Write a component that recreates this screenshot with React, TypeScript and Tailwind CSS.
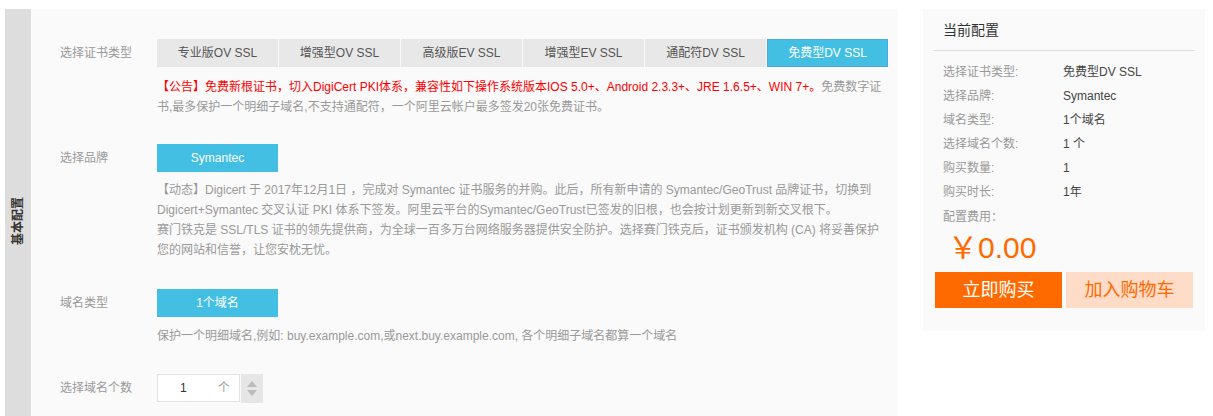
const font = { fontFamily: '"Liberation Sans", "Noto Sans CJK SC", sans-serif' };

const certTypes = ["专业版OV SSL", "增强型OV SSL", "高级版EV SSL", "增强型EV SSL", "通配符DV SSL", "免费型DV SSL"];

const summary: [string, string][] = [
  ["选择证书类型:", "免费型DV SSL"],
  ["选择品牌:", "Symantec"],
  ["域名类型:", "1个域名"],
  ["选择域名个数:", "1 个"],
  ["购买数量:", "1"],
  ["购买时长:", "1年"],
];

function Row({ label, children, className = "" }: { label: string; children: React.ReactNode; className?: string }) {
  return (
    <div className={`flex ${className}`}>
      <div className="w-[97px] shrink-0 text-[12px] leading-[28px] text-[#999]">{label}</div>
      <div className="flex-1">{children}</div>
    </div>
  );
}

function ChoiceButton({ text }: { text: string }) {
  return (
    <div className="flex h-[28px] w-[121px] items-center justify-center bg-[#43bfe4] text-[12px] text-white">{text}</div>
  );
}

export default function App() {
  return (
    <div className="h-[416px] overflow-hidden bg-white pl-[5px] pt-[9px]" style={font}>
      <div className="flex items-start">
        <div className="flex h-[424px] w-[893px] shrink-0">
          <div className="flex w-[26px] shrink-0 items-center justify-center bg-[#dddddd]">
            <span className="-rotate-90 whitespace-nowrap text-[12px] font-bold text-[#333]">基本配置</span>
          </div>
          <div className="flex-1 bg-[#fafafa] pl-[29px] pr-[10px] pt-[30px]">
            <Row label="选择证书类型">
              <div className="flex gap-[1px]">
                {certTypes.map((t, i) =>
                  i === certTypes.length - 1 ? (
                    <div key={t} className="flex h-[28px] w-[121px] items-center justify-center border border-[#4aa8e8] bg-[#43bfe4] text-[12px] text-white">{t}</div>
                  ) : (
                    <div key={t} className="flex h-[28px] w-[121px] items-center justify-center bg-[#e8e8e8] text-[12px] text-[#555]">{t}</div>
                  )
                )}
              </div>
              <p className="mt-[10px] w-[730px] text-[12px] leading-[20px] text-[#999]">
                <span className="text-[#ff0000]">【公告】免费新根证书，切入DigiCert PKI体系，兼容性如下操作系统版本IOS 5.0+、Android 2.3.3+、JRE 1.6.5+、WIN 7+。</span>
                免费数字证书,最多保护一个明细子域名,不支持通配符，一个阿里云帐户最多签发20张免费证书。
              </p>
            </Row>

            <Row label="选择品牌" className="mt-[27px]">
              <ChoiceButton text="Symantec" />
              <p className="mt-[8px] w-[730px] text-[12px] leading-[20px] text-[#999]">
                【动态】Digicert 于 2017年12月1日 ，完成对 Symantec 证书服务的并购。此后，所有新申请的 Symantec/GeoTrust 品牌证书，切换到 Digicert+Symantec 交叉认证 PKI 体系下签发。阿里云平台的Symantec/GeoTrust已签发的旧根，也会按计划更新到新交叉根下。
                <br />
                赛门铁克是 SSL/TLS 证书的领先提供商，为全球一百多万台网络服务器提供安全防护。选择赛门铁克后，证书颁发机构 (CA) 将妥善保护您的网站和信誉，让您安枕无忧。
              </p>
            </Row>

            <Row label="域名类型" className="mt-[29px]">
              <ChoiceButton text="1个域名" />
              <p className="mt-[9px] text-[12px] leading-[20px] text-[#999]">
                保护一个明细域名,例如: buy.example.com,或next.buy.example.com, 各个明细子域名都算一个域名
              </p>
            </Row>

            <Row label="选择域名个数" className="mt-[28px]">
              <div className="flex items-start">
                <div className="flex h-[28px] w-[83px] items-center border border-[#e3e3e3] bg-white text-[12px]">
                  <span className="ml-[22px] text-[#333]">1</span>
                  <span className="ml-[31px] text-[#999]">个</span>
                </div>
                <div className="ml-[1px] flex h-[29px] w-[22px] flex-col items-center justify-center gap-[3px] bg-[#e6e6e6]">
                  <svg width="10" height="6" viewBox="0 0 10 6"><path d="M0 6 L5 0 L10 6 Z" fill="#bbb" /></svg>
                  <svg width="10" height="6" viewBox="0 0 10 6"><path d="M0 0 L5 6 L10 0 Z" fill="#bbb" /></svg>
                </div>
              </div>
            </Row>
          </div>
        </div>

        <div className="ml-[25px] w-[282px] shrink-0 bg-[#fafafa] px-[10px] pb-[23px]">
          <div className="border-b border-[#dcdcdc] px-[10px] pb-[10px] pt-[12px] text-[14px] leading-[19px] text-[#333]">当前配置</div>
          <div className="px-[10px] pt-[9px]">
            {summary.map(([k, v]) => (
              <div key={k} className="flex text-[12px] leading-[24px]">
                <span className="w-[120px] text-[#999]">{k}</span>
                <span className="text-[#444]">{v}</span>
              </div>
            ))}
            <div className="mt-[1px] text-[12px] leading-[24px] text-[#999]">配置费用：</div>
            <div className="ml-[5px] text-[30px] leading-[38px] text-[#ff6a00]">￥0.00</div>
          </div>
          <div className="mt-[5px] flex gap-[4px] px-[2px]">
            <button className="h-[36px] w-[127px] bg-[#ff6a00] text-[18px] text-white">立即购买</button>
            <button className="h-[36px] w-[127px] bg-[#ffdcc8] text-[18px] text-[#ff6a00]">加入购物车</button>
          </div>
        </div>
      </div>
    </div>
  );
}
